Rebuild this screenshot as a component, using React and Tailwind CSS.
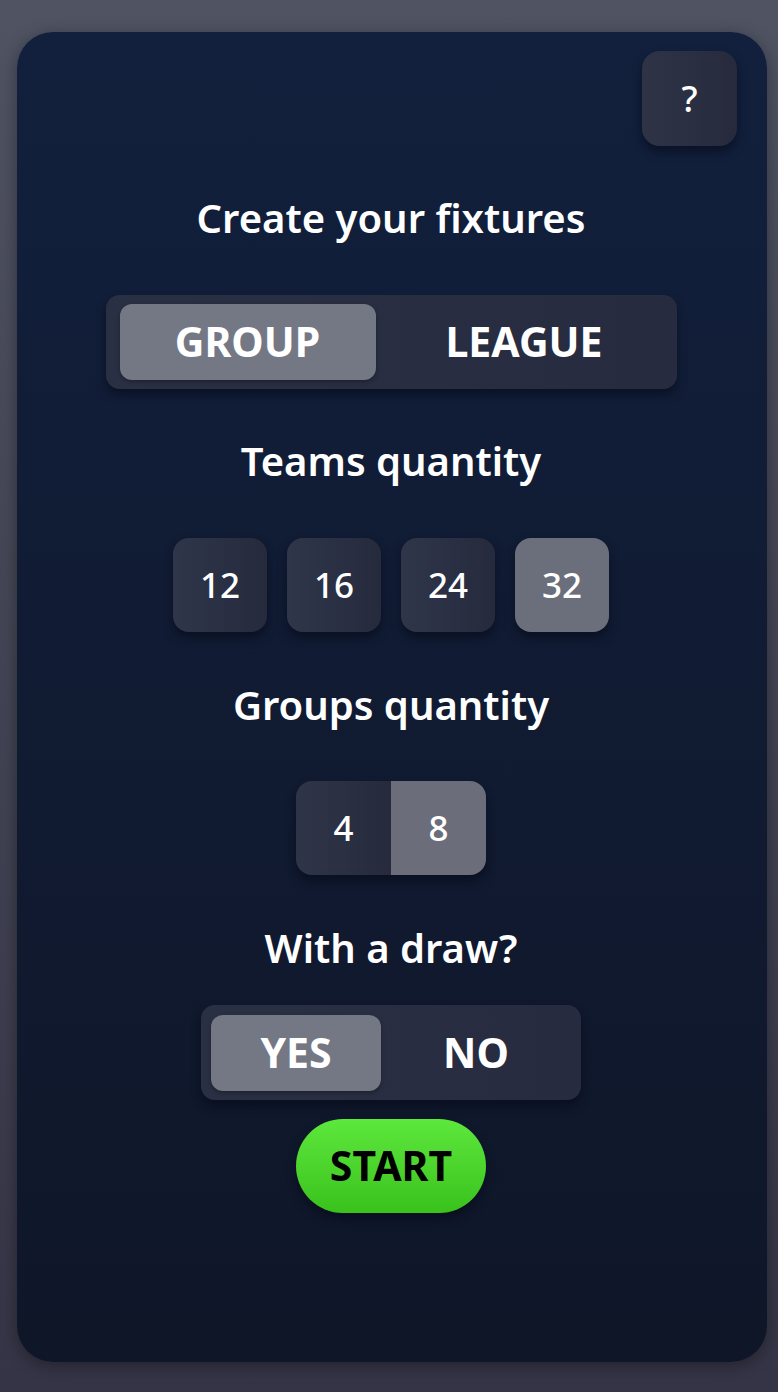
const font = { fontFamily: '"Noto Sans", "Open Sans", sans-serif' };

function NumButton({ label, active }) {
  return (
    <button
      className={
        "flex h-[94px] w-[94px] items-center justify-center rounded-[16px] text-[35px] font-medium text-white shadow-[0_6px_10px_rgba(5,10,25,0.6)] " +
        (active
          ? "bg-[#6b6f7b]"
          : "bg-gradient-to-r from-[#30364a] to-[#252a3d]")
      }
    >
      {label}
    </button>
  );
}

function Heading({ children, className = "" }) {
  return (
    <h2 className={"text-[40px] font-semibold leading-[48px] text-white " + className}>
      {children}
    </h2>
  );
}

export default function App() {
  return (
    <div
      className="min-h-[1392px] w-full bg-gradient-to-b from-[#4f5362] to-[#353446] pl-[17px] pr-[11px] pt-[32px] pb-[30px]"
      style={font}
    >
      <div className="flex h-[1330px] flex-col items-center rounded-[36px] bg-gradient-to-b from-[#12203d] to-[#0f1628] pl-[28px] pr-[30px] pt-[19px] shadow-[0_4px_16px_rgba(0,0,0,0.35)]">
        <div className="flex w-full justify-end">
          <button className="flex h-[95px] w-[95px] items-center justify-center rounded-[18px] bg-gradient-to-r from-[#2e3446] to-[#262a3c] text-[36px] font-medium text-white shadow-[0_6px_10px_rgba(5,10,25,0.6)]">
            ?
          </button>
        </div>

        <Heading className="mt-[48px]">Create your fixtures</Heading>

        <div className="mt-[53px] flex h-[94px] w-[571px] items-center gap-[10px] rounded-[14px] bg-gradient-to-r from-[#2a3044] to-[#272b3f] px-[14px] shadow-[0_6px_10px_rgba(5,10,25,0.6)]">
          <div className="flex h-[76px] w-[256px] items-center justify-center rounded-[12px] bg-[#747884] text-[41px] font-bold text-white shadow-[0_2px_4px_rgba(0,0,0,0.3)]">
            GROUP
          </div>
          <div className="flex h-[76px] flex-1 items-center justify-center text-[41px] font-bold text-white">
            LEAGUE
          </div>
        </div>

        <Heading className="mt-[48px]">Teams quantity</Heading>

        <div className="mt-[53px] flex gap-[20px]">
          <NumButton label="12" />
          <NumButton label="16" />
          <NumButton label="24" />
          <NumButton label="32" active />
        </div>

        <Heading className="mt-[49px]">Groups quantity</Heading>

        <div className="mt-[52px] flex h-[94px] w-[190px] overflow-hidden rounded-[16px] shadow-[0_6px_10px_rgba(5,10,25,0.6)]">
          <div className="flex flex-1 items-center justify-center bg-gradient-to-r from-[#2f3548] to-[#262a3c] text-[35px] font-medium text-white">
            4
          </div>
          <div className="flex flex-1 items-center justify-center bg-[#6b6e7a] text-[35px] font-medium text-white">
            8
          </div>
        </div>

        <Heading className="mt-[49px]">With a draw?</Heading>

        <div className="mt-[33px] flex h-[95px] w-[380px] items-center rounded-[14px] bg-gradient-to-r from-[#2a3044] to-[#272b3f] px-[10px] shadow-[0_6px_10px_rgba(5,10,25,0.6)]">
          <div className="flex h-[76px] w-[170px] items-center justify-center rounded-[12px] bg-[#747884] text-[41px] font-bold text-white shadow-[0_2px_4px_rgba(0,0,0,0.3)]">
            YES
          </div>
          <div className="flex h-[76px] flex-1 items-center justify-center text-[41px] font-bold text-white">
            NO
          </div>
        </div>

        <button className="mt-[19px] flex h-[94px] w-[190px] items-center justify-center rounded-full bg-gradient-to-b from-[#5de83c] to-[#3ac21c] text-[41px] font-bold text-black shadow-[0_6px_10px_rgba(5,10,25,0.6)]">
          START
        </button>
      </div>
    </div>
  );
}
